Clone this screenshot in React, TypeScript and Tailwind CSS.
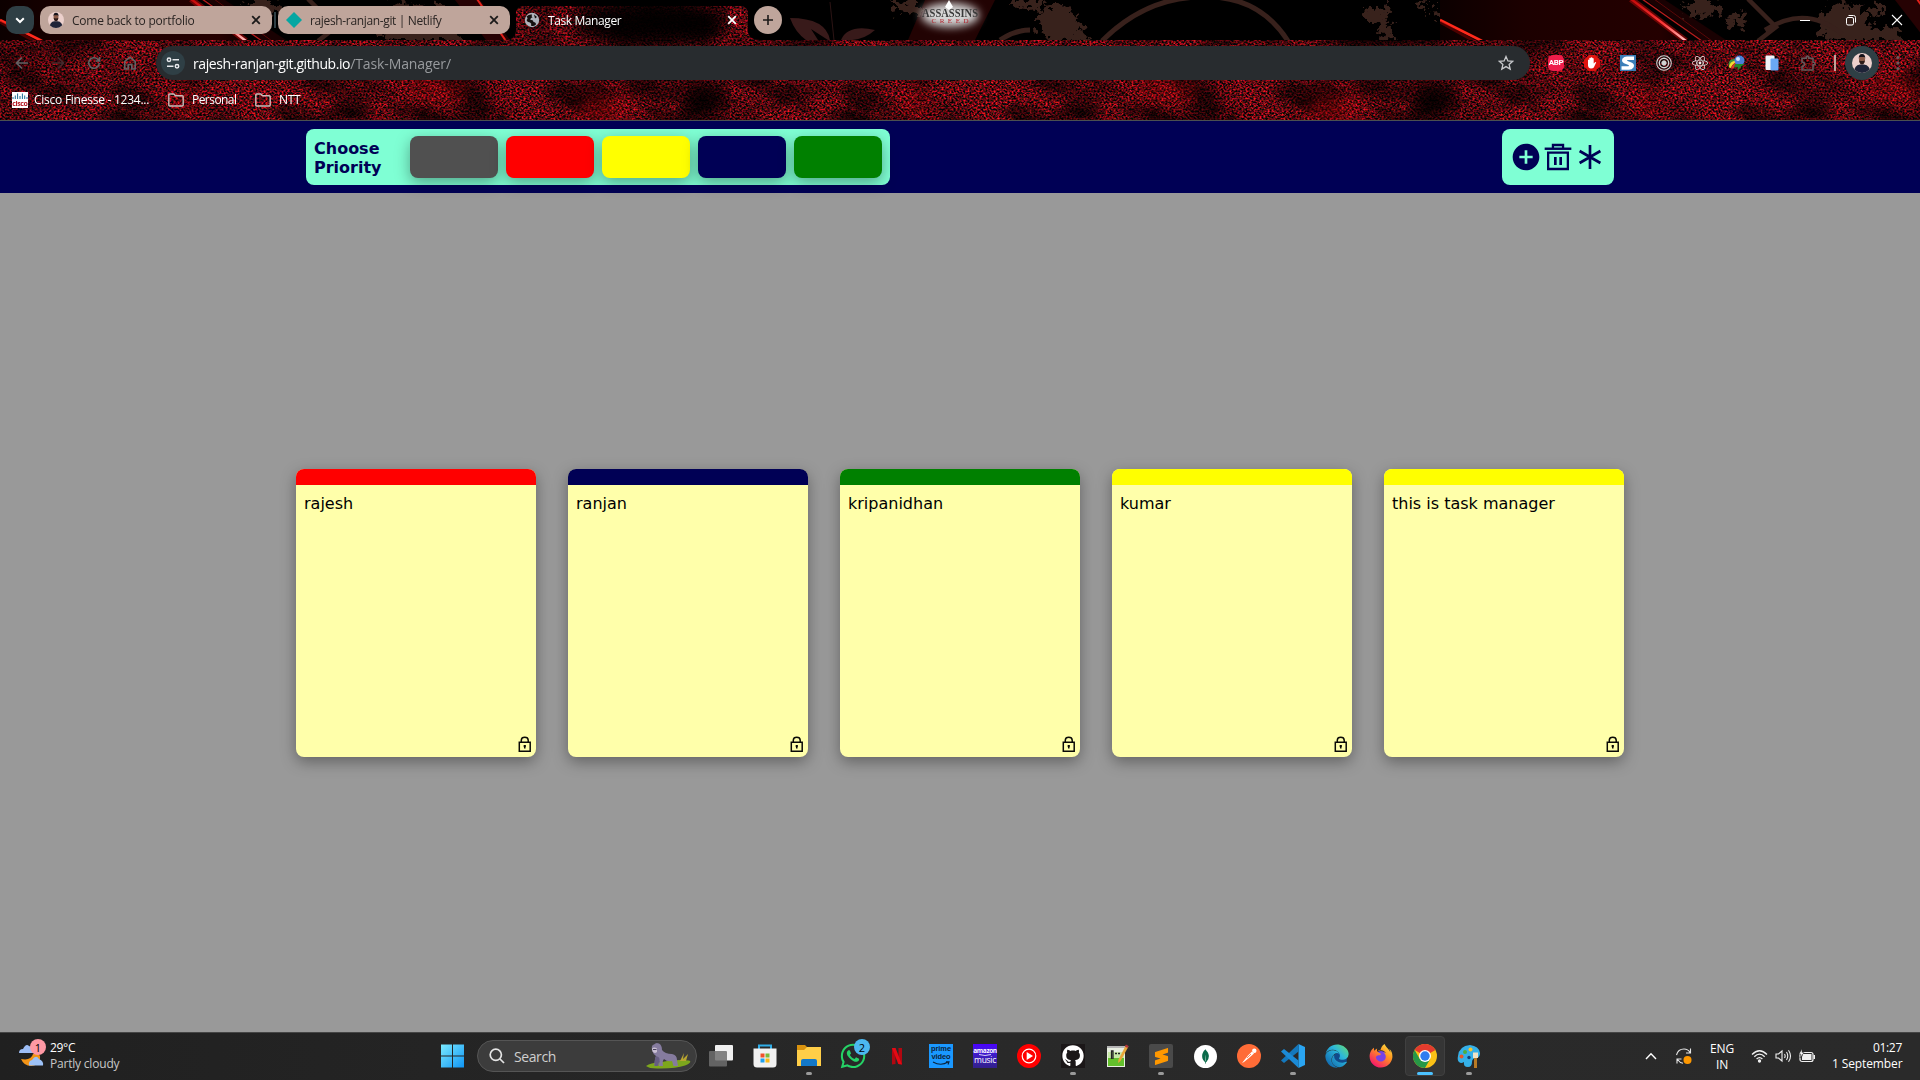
import React from "react";
import type { ReactNode } from "react";
import { FaWhatsapp, FaGithub, FaReact, FaEdge, FaFirefoxBrowser } from "react-icons/fa";
import { BiSolidPlusCircle } from "react-icons/bi";
import { SiMongodb, SiSublimetext } from "react-icons/si";

const UI = "font-['Open_Sans','Noto_Sans',sans-serif]";

/* ---------- Browser theme artwork ---------- */

function ThemeArt() {
  return (
    <svg className="absolute inset-0" width="1920" height="121" viewBox="0 0 1920 121">
      <defs>
        <filter id="grain" x="0" y="0" width="731" height="120" filterUnits="userSpaceOnUse" colorInterpolationFilters="sRGB">
          <feTurbulence type="fractalNoise" baseFrequency="0.5 0.55" numOctaves="2" seed="7" result="fine" />
          <feColorMatrix in="fine" type="matrix" values="2.3 0 0 0 -0.78  0.1 0.25 0 0 -0.13  0.25 0 0.25 0 -0.18  0 0 0 0 1" result="red" />
          <feTurbulence type="fractalNoise" baseFrequency="0.018 0.028" numOctaves="4" seed="12" result="coarse" />
          <feColorMatrix in="coarse" type="matrix" values="1.9 0 0 0 -0.12  1.9 0 0 0 -0.12  1.9 0 0 0 -0.12  0 0 0 0 1" result="mask" />
          <feComposite in="red" in2="mask" operator="arithmetic" k1="1" k2="0" k3="0" k4="0" />
        </filter>
        <filter id="soft" x="-50%" y="-50%" width="200%" height="200%"><feGaussianBlur stdDeviation="9" /></filter>
        <filter id="glow" x="-50%" y="-50%" width="200%" height="200%"><feGaussianBlur stdDeviation="4" /></filter>
        <filter id="ragged" x="-30%" y="-30%" width="160%" height="160%">
          <feTurbulence type="fractalNoise" baseFrequency="0.13" numOctaves="3" seed="4" />
          <feDisplacementMap in="SourceGraphic" scale="26" xChannelSelector="R" yChannelSelector="G" />
        </filter>
        <linearGradient id="crimson" x1="0" x2="1"><stop offset="0" stopColor="#0c0000" /><stop offset="0.35" stopColor="#1c0000" /><stop offset="0.9" stopColor="#240000" /><stop offset="1" stopColor="#120000" /></linearGradient>
        <linearGradient id="ray" x1="0" y1="0" x2="0" y2="1"><stop offset="0" stopColor="#c40808" /><stop offset="0.6" stopColor="#ff3a3a" /><stop offset="1" stopColor="#ffc4c4" /></linearGradient>
        <clipPath id="strip"><path d="M0 0H1920V40H760Q748 40 748 30V14Q748 6 740 6H524Q516 6 516 14V30Q516 40 504 40H0Z" /></clipPath>
        <symbol id="tile" width="731" height="120" viewBox="0 0 731 120">
          <rect width="731" height="120" fill="#080102" />
          <rect width="731" height="120" filter="url(#grain)" />
          <g filter="url(#soft)">
            <ellipse cx="650" cy="22" rx="80" ry="26" fill="#000" opacity="0.95" />
            <ellipse cx="648" cy="86" rx="20" ry="12" fill="#000" opacity="0.8" />
            <ellipse cx="705" cy="98" rx="26" ry="18" fill="#000" opacity="0.9" />
            <ellipse cx="474" cy="98" rx="14" ry="16" fill="#000" opacity="0.85" />
            <ellipse cx="355" cy="108" rx="12" ry="10" fill="#000" opacity="0.8" />
            <ellipse cx="330" cy="82" rx="22" ry="8" fill="#000" opacity="0.6" />
            <ellipse cx="60" cy="48" rx="60" ry="10" fill="#000" opacity="0.4" />
            <ellipse cx="186" cy="104" rx="10" ry="8" fill="#e00a1c" opacity="0.35" />
            <ellipse cx="602" cy="110" rx="26" ry="14" fill="#c00414" opacity="0.25" />
            <ellipse cx="430" cy="88" rx="26" ry="14" fill="#c00414" opacity="0.2" />
          </g>
        </symbol>
        <symbol id="frame" width="1440" height="40" viewBox="0 0 1440 40">
          <rect width="1440" height="40" fill="#000" />
          <path d="M0 0H190L245 40H0Z" fill="url(#crimson)" />
          <path d="M225 0L286 40H262L206 0Z" fill="#190102" />
          <path d="M0 20L42 41" stroke="#ff2a1c" strokeWidth="2.6" />
          <path d="M0 22L34 41" stroke="#8a0000" strokeWidth="3" opacity="0.5" />
          <path d="M191 -1L246 41" stroke="#a80808" strokeWidth="6" opacity="0.6" />
          <path d="M191 -1L246 41" stroke="url(#ray)" strokeWidth="2.4" />
          <path d="M202 -1L262 41" stroke="#b81c1c" strokeWidth="1.3" />
          <path d="M214 -1L272 41" stroke="#5a0808" strokeWidth="1" />
          <g fill="#38211c" filter="url(#ragged)">
            <ellipse cx="262" cy="8" rx="18" ry="9" />
            <ellipse cx="296" cy="20" rx="10" ry="7" />
            <ellipse cx="405" cy="24" rx="24" ry="20" />
            <ellipse cx="440" cy="34" rx="24" ry="8" />
            <ellipse cx="440" cy="10" rx="10" ry="5" />
          </g>
          <path d="M308 -1L336 27L318 41M325 30Q366 4 402 34" stroke="#38211c" strokeWidth="4.5" fill="none" />
          <path d="M455 0H480L510 40H486Z" fill="#260203" />
          <path d="M477 -1L506 41" stroke="#e0211a" strokeWidth="2" />
          <g fill="#381a1a">
            <path d="M790 18Q826 18 830 40H806Q795 32 790 18ZM811 29L828 40H818Z" fillRule="evenodd" />
            <path d="M875 30Q862 42 841 40Q848 24 875 30Z" />
          </g>
          <path d="M830 2L834 40" stroke="#2c1414" strokeWidth="1" />
          <path d="M925 0H995L975 40H908Z" fill="#220303" />
          <g fill="#38211c" filter="url(#ragged)">
            <ellipse cx="905" cy="6" rx="16" ry="6" />
            <ellipse cx="1028" cy="4" rx="18" ry="5" />
            <ellipse cx="1058" cy="22" rx="20" ry="20" />
            <ellipse cx="1070" cy="36" rx="20" ry="6" />
            <ellipse cx="1375" cy="14" rx="12" ry="9" />
            <ellipse cx="1386" cy="30" rx="7" ry="12" />
            <ellipse cx="1424" cy="6" rx="4" ry="5" />
            <ellipse cx="1436" cy="15" rx="4" ry="6" />
          </g>
          <path d="M1000 40Q1015 30 1030 30M1102 41Q1145 -2 1200 -3Q1258 -6 1288 41" stroke="#38211c" strokeWidth="5" fill="none" />
        </symbol>
      </defs>
      <use href="#tile" x="0" /><use href="#tile" x="730" /><use href="#tile" x="1461" />
      <g clipPath="url(#strip)"><use href="#frame" x="0" /><use href="#frame" x="1440" /></g>
      <g>
        <ellipse cx="950" cy="15" rx="29" ry="12" fill="#d8d8d8" filter="url(#glow)" />
        <path d="M949 0L953 7L949 10L945 7Z" fill="#fff" />
        <text x="950" y="16.500" fontSize="12" fontWeight="700" fill="#3a3a3a" fontFamily="Liberation Serif, serif" textAnchor="middle" textLength="56" lengthAdjust="spacingAndGlyphs">ASSASSINS</text>
        <text x="950" y="23" fontSize="7" fill="#b3202a" fontFamily="Liberation Serif, serif" textAnchor="middle" textLength="37">CREED</text>
      </g>
      <rect y="120" width="1920" height="1" fill="#4a4f50" />
    </svg>
  );
}

function Avatar({ className }: { className: string }) {
  return (
    <svg className={className} viewBox="0 0 20 20">
      <defs><clipPath id="face"><circle cx="10" cy="10" r="10" /></clipPath></defs>
      <g clipPath="url(#face)">
        <rect width="20" height="20" fill="#ecd0cc" />
        <path d="M2 20Q2 12 8 11.500L12 11.500Q18 12 18.500 20Z" fill="#1e2338" />
        <ellipse cx="10" cy="6.500" rx="3" ry="4" fill="#8a5a48" />
        <path d="M6.800 6Q6.500 1 10 1Q13.500 1 13.200 6L12.500 4H7.500Z" fill="#15121a" />
        <path d="M7.200 7.500Q10 8.500 12.800 7.500Q12.500 11.500 10 11.500Q7.500 11.500 7.200 7.500Z" fill="#2c1a18" />
      </g>
    </svg>
  );
}

function Cross({ className }: { className: string }) {
  return (
    <svg className={className} width="10" height="10" viewBox="0 0 10 10">
      <path d="M1.200 1.200L8.800 8.800M8.800 1.200L1.200 8.800" stroke="currentColor" strokeWidth="1.800" />
    </svg>
  );
}

/* ---------- Browser chrome ---------- */

function TabStrip() {
  return (
    <div className="flex h-10 items-start pl-1.5 pt-1.5">
      <div className="flex h-7 w-7 items-center justify-center rounded-[10px] bg-[#2f3f45]">
        <svg width="10" height="7" viewBox="0 0 10 7"><path d="M1.200 1.200L5 5L8.800 1.200" stroke="#fff" strokeWidth="2" fill="none" /></svg>
      </div>
      <div className="ml-1.5 flex h-7 w-[232px] items-center rounded-[10px] bg-[#bfa59b] pl-2 pr-[11px] text-[#2a2422]">
        <Avatar className="h-4 w-4" />
        <span className="ml-2 flex-1 whitespace-nowrap pt-0.5 text-[12px] tracking-[-0.24px]">Come back to portfolio</span>
        <Cross className="text-[#1c1a1a]" />
      </div>
      <div className="ml-[2px] mt-1.5 h-4 w-0.5 bg-[#2f3f45]" />
      <div className="ml-[2px] flex h-7 w-[232px] items-center rounded-[10px] bg-[#bfa59b] pl-2 pr-[11px] text-[#2a2422]">
        <svg width="16" height="16" viewBox="0 0 16 16"><path d="M8 0L16 8L8 16L0 8Z" fill="#05a6a2" /></svg>
        <span className="ml-2 flex-1 whitespace-nowrap pt-0.5 text-[12px] tracking-[-0.35px]">rajesh-ranjan-git | Netlify</span>
        <Cross className="text-[#1c1a1a]" />
      </div>
      <div className="ml-1.5 flex h-7 w-[232px] items-center pl-2 pr-[11px] text-white">
        <svg width="16" height="16" viewBox="0 0 16 16">
          <circle cx="8" cy="8" r="7.200" fill="#aeb3bb" />
          <path d="M2.500 4.500Q5 2 8 2.500Q7 4.500 8.500 5.500Q6 6 6.500 8Q9.500 7.500 9.500 10Q12 10 12 12.500Q9 15 7 13.500Q8 11.500 6 10.500Q3 10 2.500 8Q4.500 6.500 2.500 4.500ZM10 2.500L13 5L11 6.500Z" fill="#14100f" />
        </svg>
        <span className="ml-2 flex-1 whitespace-nowrap pt-0.5 text-[12px] tracking-[-0.4px]">Task Manager</span>
        <Cross className="text-white" />
      </div>
      <div className="ml-1.5 flex h-7 w-7 items-center justify-center rounded-full bg-[#bfa59b]">
        <svg width="10" height="10" viewBox="0 0 10 10"><path d="M5 0V10M0 5H10" stroke="#1c1a1a" strokeWidth="1.600" /></svg>
      </div>
      <div className="ml-auto flex items-center pt-2 text-white">
        <svg className="w-[46px]" height="12" viewBox="0 0 46 12"><path d="M18 6.500H28" stroke="currentColor" /></svg>
        <svg className="w-[46px]" height="12" viewBox="0 0 46 12"><rect x="18.500" y="3.500" width="7" height="7.500" rx="1.500" fill="none" stroke="currentColor" /><path d="M20.500 1.500H25.500Q27.500 1.500 27.500 3.500V8.500" fill="none" stroke="currentColor" /></svg>
        <svg className="w-[46px]" height="12" viewBox="0 0 46 12"><path d="M18 1L28 11M28 1L18 11" stroke="currentColor" strokeWidth="1.100" /></svg>
      </div>
    </div>
  );
}

function Slot({ children }: { children: ReactNode }) {
  return <div className="flex w-9 shrink-0 items-center justify-center">{children}</div>;
}

function Toolbar() {
  return (
    <div className="flex h-[46px] items-center pl-1">
      <div className="flex text-[#626264]">
        <Slot><svg width="14" height="14" viewBox="0 0 14 14"><path d="M7 1.500L1.500 7L7 12.500M1.500 7H13" stroke="currentColor" strokeWidth="1.600" fill="none" /></svg></Slot>
        <Slot><svg width="14" height="14" viewBox="0 0 14 14"><path d="M7 1.500L12.500 7L7 12.500M12.500 7H1" stroke="#462a2d" strokeWidth="1.500" fill="none" /></svg></Slot>
        <Slot><svg width="14" height="14" viewBox="0 0 14 14"><path d="M12.300 7A5.300 5.300 0 1 1 10.700 3.200L12 4.500M12.600 1V5H8.600" stroke="currentColor" strokeWidth="1.600" fill="none" /></svg></Slot>
        <Slot><svg width="14" height="14" viewBox="0 0 14 14"><path d="M1.800 13V5.300L7 1.300L12.200 5.300V13H8.800V8.500H5.200V13Z" stroke="currentColor" strokeWidth="1.600" fill="none" /></svg></Slot>
      </div>
      <div className="ml-2 flex h-[34px] w-[1374px] items-center rounded-full bg-[#282c2f] pl-[5px] pr-4">
        <div className="flex h-6 w-6 items-center justify-center rounded-full bg-[#2f3f45]">
          <svg width="14" height="14" viewBox="0 0 14 14" fill="none" stroke="#e8eaed" strokeWidth="1.500"><circle cx="3" cy="3.800" r="1.700" /><path d="M6.500 3.800H13M1 10.200H7.500" /><circle cx="11" cy="10.200" r="1.700" /></svg>
        </div>
        <span className="ml-2 whitespace-nowrap pt-px text-[14px] leading-[20px] text-white"><span className="tracking-[-0.42px]">rajesh-ranjan-git.github.io</span><span className="tracking-[-0.1px] text-[#989b9e]">/Task-Manager/</span></span>
        <svg className="ml-auto" width="16" height="16" viewBox="0 0 16 16"><path d="M8 1.500L9.900 5.900L14.700 6.300L11.100 9.400L12.200 14.100L8 11.600L3.800 14.100L4.900 9.400L1.300 6.300L6.100 5.900Z" stroke="#c7c9cc" strokeWidth="1.300" fill="none" /></svg>
      </div>
      <div className="ml-2 flex items-center">
        <Slot>
          <div className="flex h-4 w-4 items-center justify-center rounded-[5px] bg-[#ee1d4a] font-['Roboto',sans-serif] text-[8px] font-bold leading-none tracking-[-0.3px] text-white">ABP</div>
        </Slot>
        <Slot>
          <svg width="16" height="16" viewBox="0 0 16 16"><path d="M4.700 0H11.300L16 4.700V11.300L11.300 16H4.700L0 11.300V4.700Z" fill="#e0140f" /><path d="M4 8V5Q4.700 4.200 5.300 5V3.200Q6 2.400 6.700 3.200V2.600Q7.500 1.800 8.300 2.600V3.200Q9 2.500 9.700 3.400V8.500L11 7.200Q12 6.800 12.200 7.600L9.800 12.500Q9 13.500 7 13.500Q4.300 13.300 4 10.500Z" fill="#fff" /></svg>
        </Slot>
        <Slot>
          <svg width="16" height="16" viewBox="0 0 16 16"><rect width="16" height="16" fill="#3b7eb8" /><path d="M14 1.500V5H7.500Q6.500 5.300 7.500 6L12 7.800Q15 9.500 13.500 12.500Q12 14.700 9 14.700H1.500V11.200H8.500Q9.500 10.700 8.500 10L4 8.300Q1 6.500 2.500 3.500Q4 1.500 7 1.500Z" fill="#fff" /></svg>
        </Slot>
        <Slot>
          <svg width="16" height="16" viewBox="0 0 16 16" fill="none" stroke="#d4d4d4"><circle cx="8" cy="8" r="7.300" strokeWidth="1.100" /><circle cx="8" cy="8" r="4.700" strokeWidth="1.400" /><circle cx="8" cy="8" r="2.200" fill="#d4d4d4" /></svg>
        </Slot>
        <Slot><FaReact className="h-4 w-4 text-[#f4e9e9]" /></Slot>
        <Slot>
          <svg width="17" height="16" viewBox="0 0 17 16"><path d="M1 12Q-1 4.500 7 3.500L8 6Q3 7 1 12Z" fill="#3f8f3a" /><path d="M1 12.500Q1.500 6 8 5.500L9 7.500Q4.500 8 3 13Z" fill="#f2dc2e" /><path d="M3 13.500Q4 8.500 8.500 8L10 10Q7 10 5.500 13.500Z" fill="#d93a2a" /><circle cx="11.500" cy="5.500" r="5" fill="#4a80d8" /><circle cx="10" cy="4" r="2" fill="#cfe3fb" /><path d="M7 9H17L13.500 11L10 15.500L9.500 12L6 12.500Z" fill="#1f8a2a" /></svg>
        </Slot>
        <Slot>
          <svg width="16" height="16" viewBox="0 0 16 16"><rect x="1.500" y="0.500" width="9" height="14.500" rx="1" fill="#f1f4f8" /><rect x="6.500" y="3.500" width="8" height="12" rx="1" fill="#6aa9f4" /></svg>
        </Slot>
        <Slot>
          <svg width="17" height="17" viewBox="0 0 17 17"><path d="M2 3.200H6.200V2Q7.500 0.300 8.800 2V3.200H13V7.300H14.200Q15.800 8.500 14.200 9.800H13V15H2V11.500Q4.500 11 4.500 9.200Q4.500 7.400 2 7Z" fill="none" stroke="#66595b" strokeWidth="1.600" /></svg>
        </Slot>
      </div>
      <div className="ml-2 h-4 w-0.5 bg-[#bfa59b]" />
      <div className="ml-[9px] flex h-[34px] w-[34px] items-center justify-center rounded-full bg-[#2f3f45]"><Avatar className="h-5 w-5" /></div>
      <svg className="ml-[17px]" width="4" height="16" viewBox="0 0 4 16" fill="#6a5c5e"><circle cx="2" cy="2.500" r="1.600" /><circle cx="2" cy="8" r="1.600" /><circle cx="2" cy="13.500" r="1.600" /></svg>
    </div>
  );
}

function Folder() {
  return <svg width="16" height="14" viewBox="0 0 16 14"><path d="M0.800 12V2Q0.800 1 1.800 1H5.800L7.500 2.800H14.200Q15.200 2.800 15.200 3.800V12Q15.200 13 14.200 13H1.800Q0.800 13 0.800 12Z" stroke="#c9bdbb" strokeWidth="1.400" fill="none" /></svg>;
}

function BookmarksBar() {
  return (
    <div className="flex h-[34px] items-center whitespace-nowrap pb-[6px] pl-3 text-[12px] text-white">
      <svg width="16" height="16" viewBox="0 0 16 16">
        <rect width="16" height="16" fill="#fff" />
        <path d="M1 5V7M3.300 3.500V7M5.600 1.500V7M8 4V7M10.400 1.500V7M12.700 3.500V7M15 5V7" stroke="#1f6f93" strokeWidth="1" />
        <text x="8" y="14.300" fontSize="7" fontWeight="700" fill="#b3121d" textAnchor="middle" textLength="15.500" fontFamily="Open Sans, sans-serif">cisco</text>
      </svg>
      <span className="ml-1.5 w-[134px] tracking-[-0.25px]">Cisco Finesse - 1234...</span>
      <Folder />
      <span className="ml-2 w-[63px] tracking-[-0.55px]">Personal</span>
      <Folder />
      <span className="ml-2 tracking-[-0.3px]">NTT</span>
    </div>
  );
}

/* ---------- Task manager app ---------- */

const swatches = ["bg-[#505050]", "bg-[#ff0000]", "bg-[#ffff00]", "bg-[#000055]", "bg-[#008000]"];

const notes = [
  { text: "rajesh", bar: "bg-[#ff0000]" },
  { text: "ranjan", bar: "bg-[#000055]" },
  { text: "kripanidhan", bar: "bg-[#008000]" },
  { text: "kumar", bar: "bg-[#ffff00]" },
  { text: "this is task manager", bar: "bg-[#ffff00]" },
];

function AppHeader() {
  return (
    <header className="relative z-10 flex h-[72px] items-center justify-between bg-[#000055] px-[306px]">
      <div className="flex h-14 items-center gap-2 rounded-lg bg-[#7fffd4] px-2">
        <h1 className="w-[88px] pr-2 pt-0.5 text-[16px] font-bold leading-[19px] text-[#000055]">Choose Priority</h1>
        {swatches.map((c) => (
          <div key={c} className={`h-[42px] w-[88px] rounded-lg shadow-[0_5px_15px_rgba(0,0,0,0.35)] ${c}`} />
        ))}
      </div>
      <div className="flex h-14 w-28 items-center justify-center rounded-lg bg-[#7fffd4] text-[#000055]">
        <BiSolidPlusCircle className="h-8 w-8" />
        <svg width="32" height="32" viewBox="0 0 24 24" fill="none" stroke="currentColor">
          <path d="M2 5.800H22" strokeWidth="1.800" /><path d="M8.200 5.500V3H15.800V5.500M4.600 8.800H19.400V21H4.600Z" strokeWidth="1.700" /><path d="M10 12V18M14 12V18" strokeWidth="2" />
        </svg>
        <svg width="32" height="32" viewBox="0 0 24 24" stroke="currentColor" strokeWidth="2">
          <path d="M12 3V21M4.200 7.500L19.800 16.500M19.800 7.500L4.200 16.500" />
        </svg>
      </div>
    </header>
  );
}

function NoteCard({ text, bar }: { text: string; bar: string }) {
  return (
    <article className="flex h-72 w-60 flex-col overflow-hidden rounded-lg bg-[#ffffaa] shadow-[0_5px_15px_rgba(0,0,0,0.35)]">
      <div className={`h-4 ${bar}`} />
      <p className="flex-1 px-2 pt-[9px] text-[16px] leading-[19px] text-black">{text}</p>
      <div className="flex justify-end pb-[5px] pr-1">
        <svg width="14" height="16" viewBox="0 0 14 16" fill="none" stroke="#0a0a06" strokeWidth="1.500">
          <path d="M1.300 6.300H12.200V15.200H1.300ZM3.300 6V4Q3.500 1.200 6.750 1.200Q10 1.200 10.200 4V6" /><path d="M6.750 9V12.500" strokeWidth="1.600" /><path d="M5.600 10H7.900" />
        </svg>
      </div>
    </article>
  );
}

/* ---------- Windows taskbar ---------- */

type Running = "none" | "open" | "active";

function TaskItem({ children, state = "none" }: { children: ReactNode; state?: Running }) {
  return (
    <div className="relative flex h-[47px] w-11 items-center justify-center">
      {state === "active" && <div className="absolute left-0.5 top-[3px] h-10 w-10 rounded border border-[#404040] bg-[#353535]" />}
      <div className="relative -top-[0.5px] flex h-6 w-6 items-center justify-center">{children}</div>
      {state === "open" && <div className="absolute bottom-[5px] h-[3px] w-1.5 rounded-full bg-[#9a9a9a]" />}
      {state === "active" && <div className="absolute bottom-[5px] h-[3px] w-4 rounded-full bg-[#4cc2ff]" />}
    </div>
  );
}

function Gorilla() {
  return (
    <svg width="46" height="28" viewBox="0 0 46 28">
      <path d="M1 24Q6 20.500 14 20.500Q30 17 44 18.500Q48 20 40 23.500Q30 27 12 26.500Q4 26.500 1 24Z" fill="#7da71d" />
      <path d="M35 19L39 11L38 17L43 12L41 19Z" fill="#b8a530" />
      <path d="M7 8Q6 3 9 2.500Q11 0 14 1.500Q17 3 17 8Q20 12 27 12Q32 13 32 18L33 24H28.500L27 19Q22 20 19 17Q17 19 18 24H14L14.500 18L13 24H9.500Q9.500 17 11 14Q8 12 7 8Z" fill="#857b9e" />
      <path d="M11 14Q15 15 14.500 18L13 24H9.500Q9.500 17 11 14Z" fill="#665d82" />
      <path d="M7 6.500Q9 4.500 12 6.500L12 10Q9.500 12 7.500 9.500Z" fill="#c9bfd2" />
      <path d="M8 7.500H11.500" stroke="#4a4360" strokeWidth="1" />
    </svg>
  );
}

function Taskbar() {
  return (
    <footer className={`flex h-12 items-center border-t border-[#454545] bg-linear-to-r from-[#202020] via-[#292929] to-[#2a2a2a] text-[12px] text-white ${UI}`}>
      <div className="flex w-[430px] items-center pb-px pl-[18px]">
        <div className="relative -top-px h-9 w-[30px]">
          <svg width="30" height="36" viewBox="0 0 30 36">
            <path d="M1 16Q1 12 5 12Q8 6 11 9Q15 10 15 16Z" fill="#9dbdf5" />
            <path d="M3 22Q13 24 15 17Q23 15 22 22Q20 29 13 29Q6 29 3 22Z" fill="#f29316" />
            <path d="M11 28.500Q10 24 14 23Q18 17 21 22Q26 24 25 28.500Z" fill="#9dc2f7" />
          </svg>
          <div className="absolute left-3 top-[2px] flex h-4 w-4 items-center justify-center rounded-full bg-[#ff99a4] text-[11px] leading-none text-black">1</div>
        </div>
        <div className="ml-[2px] leading-[16px]">
          <div className="tracking-[-0.3px]">29°C</div>
          <div className="whitespace-nowrap tracking-[-0.2px] text-[#c8c8c8]">Partly cloudy</div>
        </div>
      </div>
      <TaskItem>
        <svg width="24" height="24" viewBox="0 0 24 24">
          <defs><linearGradient id="win" x1="0" y1="0" x2="1" y2="1"><stop offset="0" stopColor="#7beaff" /><stop offset="1" stopColor="#0f95f5" /></linearGradient></defs>
          <path d="M1 0.500H12V11.500H1ZM13 0.500H24V11.500H13ZM1 12.500H12V23.500H1ZM13 12.500H24V23.500H13Z" fill="url(#win)" />
        </svg>
      </TaskItem>
      <div className="mb-px ml-[3px] mr-[2px] flex h-8 w-[220px] items-center rounded-full border border-[#555] bg-[#3c3c3c] pl-[11px] pr-[5px]">
        <svg width="16" height="16" viewBox="0 0 16 16" fill="none" stroke="#e4e4e4" strokeWidth="1.700"><circle cx="6.800" cy="6.800" r="5.600" /><path d="M11 11L15 15" /></svg>
        <span className="ml-[9px] flex-1 text-[14px] tracking-[-0.4px] text-[#cfcfcf]">Search</span>
        <Gorilla />
      </div>
      <TaskItem><svg width="24" height="24" viewBox="0 0 24 24"><rect x="6" y="1" width="18" height="15.500" rx="1" fill="#f0f0f0" /><rect x="0" y="7" width="18" height="15.500" rx="1" fill="#6e6e6e" opacity="0.85" /></svg></TaskItem>
      <TaskItem>
        <svg width="24" height="24" viewBox="0 0 24 24"><path d="M6 5V1.500H18V5" fill="none" stroke="#30aee8" strokeWidth="2" /><path d="M0.500 4.500H23.500V20Q23.500 23.500 20 23.500H4Q0.500 23.500 0.500 20Z" fill="#f1f1f1" /><path d="M7.500 9.500H11.500V13.500H7.500Z" fill="#f0512a" /><path d="M12.500 9.500H16.500V13.500H12.500Z" fill="#7db93a" /><path d="M7.500 14.500H11.500V18.500H7.500Z" fill="#1fa0ef" /><path d="M12.500 14.500H16.500V18.500H12.500Z" fill="#fbb917" /></svg>
      </TaskItem>
      <TaskItem state="open">
        <svg width="24" height="24" viewBox="0 0 24 24"><path d="M0 1H8L10 3V7H0Z" fill="#d9920e" /><path d="M0 6H7L10 3H24V22H0Z" fill="#ffce48" /><path d="M4 22V17Q4 15 6 15H18Q20 15 20 17V22Z" fill="#1378c8" /></svg>
      </TaskItem>
      <TaskItem>
        <FaWhatsapp className="h-7 w-7 shrink-0 text-[#25d366]" />
        <div className="absolute -top-[5px] left-[13px] flex h-4 w-4 items-center justify-center rounded-full bg-[#4cb8f0] text-[11px] leading-none text-black">2</div>
      </TaskItem>
      <TaskItem><svg width="24" height="24" viewBox="0 0 24 24"><path d="M7 4H10.500V20L7 20.500ZM13.500 4H17V20.500L13.500 20Z" fill="#b20710" /><path d="M7 4H10.500L17 20.500L13.300 20Z" fill="#e50914" /></svg></TaskItem>
      <TaskItem>
        <div className="flex h-6 w-6 flex-col items-center bg-[#1a98ff] pt-px font-['Liberation_Sans',sans-serif] text-[7.500px] font-bold leading-[8px] tracking-[-0.1px] text-[#0b2138]">
          <span>prime</span>
          <span>video</span>
          <svg width="18" height="5" viewBox="0 0 18 5"><path d="M1 1Q9 5.500 16 1M14 0.700H17L16 3.500" stroke="currentColor" strokeWidth="1.100" fill="none" /></svg>
        </div>
      </TaskItem>
      <TaskItem>
        <div className="flex h-6 w-6 flex-col items-center bg-linear-to-b from-[#4a00ff] to-[#32208a] pt-[3px] text-white">
          <span className="text-[6.500px] font-bold leading-[7px] tracking-[-0.4px]">amazon</span>
          <svg width="14" height="2" viewBox="0 0 14 2"><path d="M1 0.500Q7 2.500 13 0.500" stroke="currentColor" strokeWidth="0.800" fill="none" /></svg>
          <span className="text-[8.500px] leading-[8px] tracking-[-0.3px]">music</span>
        </div>
      </TaskItem>
      <TaskItem><svg width="24" height="24" viewBox="0 0 24 24"><circle cx="12" cy="12" r="12" fill="#f00" /><circle cx="12" cy="12" r="6.800" fill="none" stroke="#fff" strokeWidth="1.200" /><path d="M9.700 8L16 12L9.700 16Z" fill="#fff" /></svg></TaskItem>
      <TaskItem state="open"><div className="flex h-6 w-6 items-center justify-center bg-[#1b1718]"><FaGithub className="h-[22px] w-[22px] text-white" /></div></TaskItem>
      <TaskItem>
        <svg width="24" height="24" viewBox="0 0 24 24"><path d="M2 2H20V23H2Z" fill="#e9efe2" /><path d="M3 12H19V22H3Z" fill="#63c02c" /><path d="M3 8H19V14H3Z" fill="#c7e8a8" /><path d="M2 2H20V4H2Z" fill="#b5b5b5" /><path d="M6.500 15V7H8V15M10 9.500H12M13 9.500H15" stroke="#222" strokeWidth="1.300" fill="none" /><path d="M21 1L23.500 2.500L15.500 17L13 19L13.500 15.500Z" fill="#e8a73a" /><path d="M21 0.500L23.500 2L22.500 4L20 2.500Z" fill="#b0303a" /></svg>
      </TaskItem>
      <TaskItem state="open"><div className="flex h-6 w-6 items-center justify-center rounded-[2px] bg-[#4a4a4a]"><SiSublimetext className="h-[17px] w-[17px] text-[#ff9800]" /></div></TaskItem>
      <TaskItem><div className="flex h-[23px] w-[23px] items-center justify-center rounded-full bg-white"><SiMongodb className="h-[15px] w-[15px] text-[#0a6b4a]" /></div></TaskItem>
      <TaskItem><svg width="24" height="24" viewBox="0 0 24 24"><circle cx="12" cy="12" r="12" fill="#ff6c37" /><path d="M5 19L11 11.500L15 7.500L17 9.500L12.500 13.500L7 18Z" fill="#fff" /><circle cx="17.300" cy="6.700" r="2.200" fill="#fff" /><path d="M10 14L14 10" stroke="#ff6c37" strokeWidth="0.800" /></svg></TaskItem>
      <TaskItem state="open">
        <svg width="24" height="24" viewBox="0 0 24 24"><path d="M17.500 0L24 3V21L17.500 24Z" fill="#2aa5f2" /><path d="M17.500 0V7.500L3 19L0 16.500Z" fill="#1478bd" /><path d="M17.500 24V16.500L3 5L0 7.500Z" fill="#1b8ad6" /></svg>
      </TaskItem>
      <TaskItem>
        <svg className="absolute h-0 w-0"><defs><linearGradient id="edgeFill" x1="1" y1="0" x2="0" y2="1"><stop offset="0" stopColor="#6be06a" /><stop offset="0.4" stopColor="#2bb6dc" /><stop offset="1" stopColor="#0c59a4" /></linearGradient><linearGradient id="foxFill" x1="1" y1="0" x2="0.300" y2="1"><stop offset="0" stopColor="#fff04a" /><stop offset="0.45" stopColor="#ff9520" /><stop offset="1" stopColor="#f5156c" /></linearGradient></defs></svg>
        <div className="absolute left-2 top-2 h-3.5 w-3.5 rounded-full bg-[#114a8b]" />
        <FaEdge className="relative h-6 w-6" fill="url(#edgeFill)" stroke="none" />
      </TaskItem>
      <TaskItem>
        <div className="absolute left-[6px] top-[7px] h-3 w-3 rounded-full bg-[#7542e5]" />
        <FaFirefoxBrowser className="relative h-6 w-6" fill="url(#foxFill)" stroke="none" />
      </TaskItem>
      <TaskItem state="active">
        <svg width="24" height="24" viewBox="0 0 24 24"><circle cx="12" cy="12" r="12" fill="#fbc116" /><path d="M12 12L1.600 6A12 12 0 0 1 22.400 6Z" fill="#e33b2e" /><path d="M1.600 6A12 12 0 0 0 12 24L17.200 15L12 12L6.800 15Z" fill="#279847" /><circle cx="12" cy="12" r="6" fill="#fff" /><circle cx="12" cy="12" r="4.700" fill="#2f7cf0" /></svg>
      </TaskItem>
      <TaskItem state="open">
        <svg width="24" height="24" viewBox="0 0 24 24"><path d="M1 12Q2 2 13 1Q22 2 23 9Q23 13 20 14Q15 14 15 18Q15 23 11 23Q6 23 7 18Q4 20 2 18Q0 16 1 12Z" fill="#35b0e8" /><circle cx="8" cy="8" r="2" fill="#4cae3e" /><circle cx="13.500" cy="5.500" r="2" fill="#f7c52b" /><circle cx="4.500" cy="12.500" r="2" fill="#e4582a" /><circle cx="12" cy="13.500" r="1.700" fill="#14447a" /><path d="M16 8.500H21V14H16Z" fill="#f1e3c6" /><path d="M17 14H20V24H17Z" fill="#b97a24" /></svg>
      </TaskItem>
      <div className="ml-auto flex items-center pb-px pr-[18px]">
        <svg width="12" height="8" viewBox="0 0 12 8"><path d="M1 7L6 1.800L11 7" stroke="#fff" strokeWidth="1.400" fill="none" /></svg>
        <svg className="ml-[18px]" width="18" height="18" viewBox="0 0 18 18"><path d="M1.500 8Q3 2 9 2Q13 2 15 5.500M15.500 1.500V6H11M2 16.500V12H6.500M2.500 12.500Q5 16 8 16.300" stroke="#e6e6e6" strokeWidth="1.100" fill="none" /><circle cx="12.500" cy="13" r="4" fill="#ff9800" /></svg>
        <div className="ml-[17px] w-[24px] pt-px text-center leading-[16px] tracking-[-0.2px]"><div>ENG</div><div>IN</div></div>
        <svg className="ml-[17px]" width="17" height="14" viewBox="0 0 17 14" fill="none" stroke="#f0f0f0" strokeWidth="1.300"><path d="M1 5.500Q8.500 -2 16 5.500M3.300 7.800Q8.500 2.600 13.700 7.800M5.600 10Q8.500 7.200 11.400 10" /><circle cx="8.500" cy="12" r="1" fill="#f0f0f0" /></svg>
        <svg className="ml-[7px]" width="17" height="14" viewBox="0 0 17 14" fill="none" stroke="#f0f0f0" strokeWidth="1.100"><path d="M1 5V9H3.500L7 12V2L3.500 5ZM9.500 5Q10.800 7 9.500 9M11.500 3Q14 7 11.500 11M13.500 1.200Q17.500 7 13.500 12.800" /></svg>
        <svg className="ml-[6px]" width="18" height="14" viewBox="0 0 18 14"><rect x="2" y="3.500" width="13" height="9" rx="2" fill="none" stroke="#f0f0f0" strokeWidth="1.200" /><path d="M5 5H13.500V11H4V8Z" fill="#f0f0f0" /><path d="M15.500 6H17V10H15.500Z" fill="#f0f0f0" /><path d="M4 0L1 5H3L2 9L6 3.500H4Z" fill="#fff" stroke="#2a2a2a" strokeWidth="0.500" /></svg>
        <div className="ml-4 w-[70px] whitespace-nowrap text-right leading-[16px]"><div className="tracking-[-0.3px]">01:27</div><div className="tracking-[-0.12px]">1 September</div></div>
      </div>
    </footer>
  );
}

export default function App() {
  return (
    <div className="flex h-[1080px] w-[1920px] flex-col overflow-hidden bg-[#999999]">
      <div className={`relative h-[121px] shrink-0 bg-black ${UI}`}>
        <ThemeArt />
        <div className="relative">
          <TabStrip />
          <Toolbar />
          <BookmarksBar />
        </div>
      </div>
      <div className="flex flex-1 flex-col font-['DejaVu_Sans',Verdana,sans-serif]">
        <AppHeader />
        <main className="flex flex-1 items-center justify-center gap-8">
          {notes.map((n) => (
            <NoteCard key={n.text} text={n.text} bar={n.bar} />
          ))}
        </main>
      </div>
      <Taskbar />
    </div>
  );
}
